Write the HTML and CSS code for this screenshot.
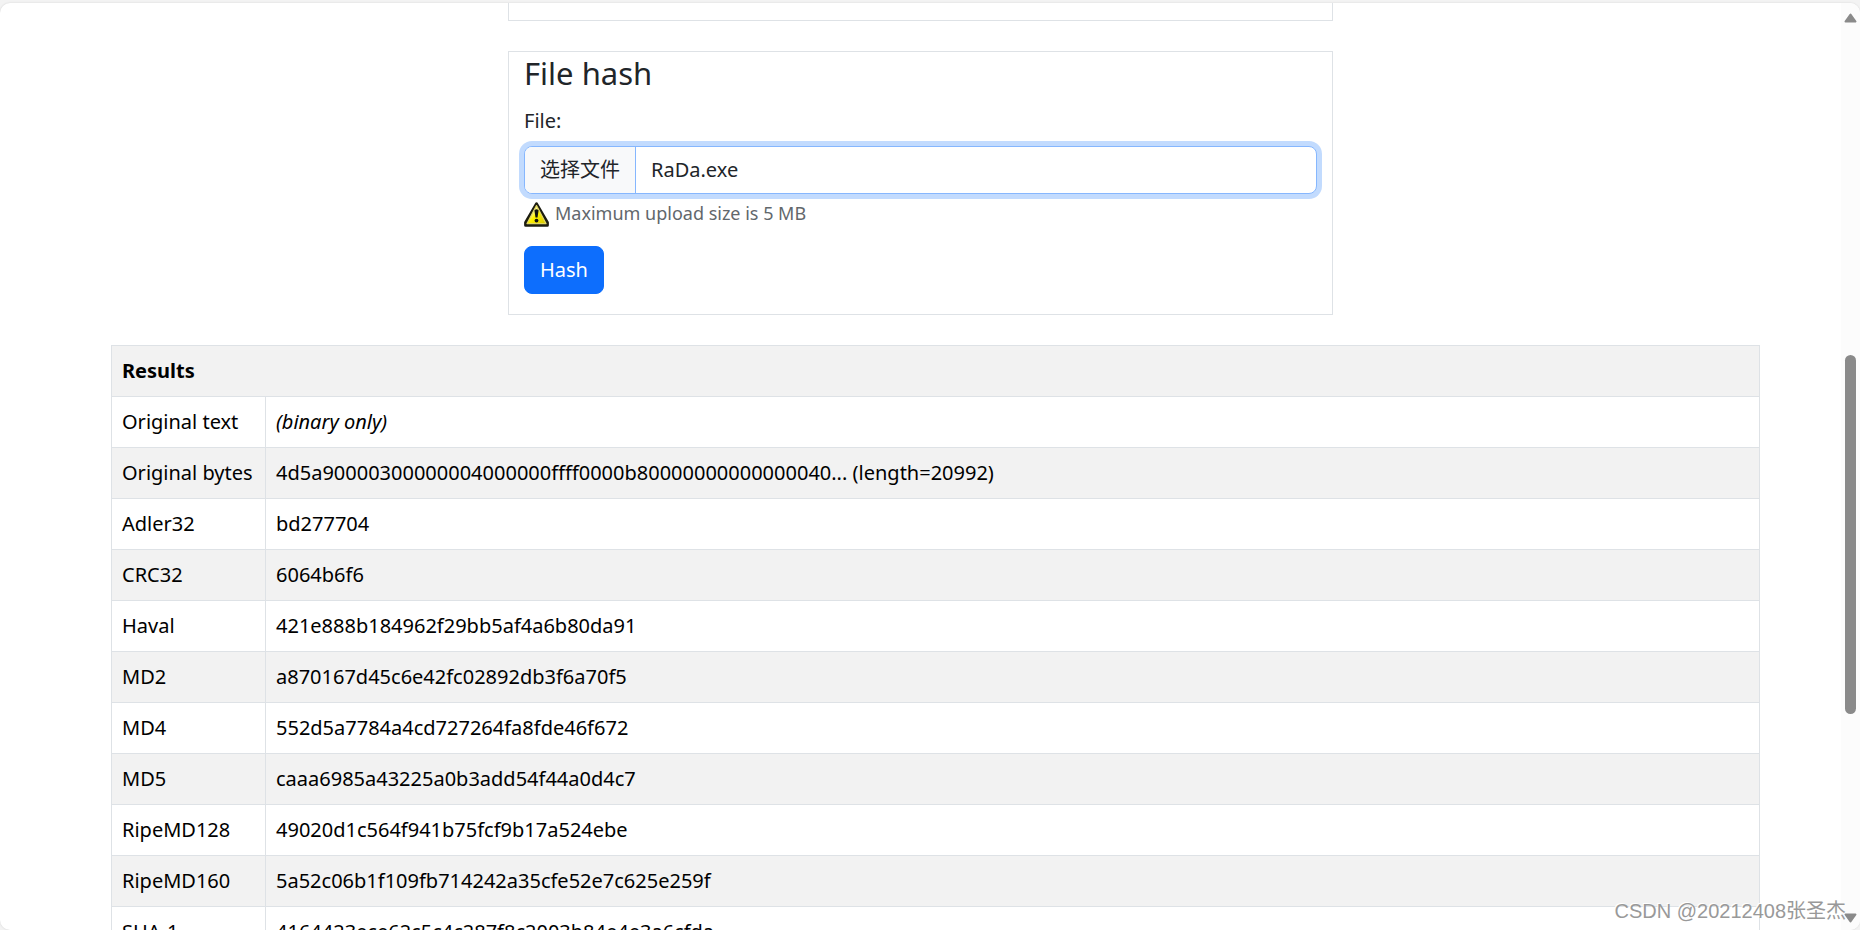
FILE: index.html
```html
<!DOCTYPE html>
<html lang="zh-CN">
<head>
<meta charset="utf-8">
<title>File hash</title>
<link rel="stylesheet" href="styles.css">
</head>
<body>
<div class="viewport">
  <main class="page">
    <section class="card card-previous"></section>
    <form class="card">
      <h2 class="card-title">File hash</h2>
      <label class="field-label" for="file">File:</label>
      <div class="file-field">
        <span class="file-button">选择文件</span>
        <span class="file-name">RaDa.exe</span>
        <input class="file-input" type="file" id="file">
      </div>
      <p class="hint">
        <svg class="hint-icon" viewBox="0 0 25 25" aria-hidden="true">
          <defs>
            <linearGradient id="warn" x1="0" y1="0" x2="1" y2="1">
              <stop offset="0.3" stop-color="#fffbb0"/>
              <stop offset="0.5" stop-color="#fff200"/>
              <stop offset="1" stop-color="#d2c400"/>
            </linearGradient>
          </defs>
          <path d="M12.5 2 L23.3 20.5 V23.2 H1.7 V20.5 Z" fill="#1c1c10" stroke="#1c1c10" stroke-width="3.2" stroke-linejoin="round"/>
          <path d="M12.5 3.6 L22 21.6 H3 Z" fill="url(#warn)" stroke="#e0d660" stroke-width="1.2" stroke-linejoin="round"/>
          <path d="M10.4 8.5 Q12.5 6 14.6 8.5 L13.5 15.6 H11.5 Z" fill="#111"/>
          <circle cx="12.5" cy="18.6" r="1.9" fill="#111"/>
        </svg>
        <span>Maximum upload size is 5 MB</span>
      </p>
      <button class="submit" type="submit">Hash</button>
    </form>
    <table class="results">
      <thead><tr><th colspan="2">Results</th></tr></thead>
      <tbody>
        <tr><td>Original text</td><td><i>(binary only)</i></td></tr>
        <tr><td>Original bytes</td><td>4d5a90000300000004000000ffff0000b80000000000000040... (length=20992)</td></tr>
        <tr><td>Adler32</td><td>bd277704</td></tr>
        <tr><td>CRC32</td><td>6064b6f6</td></tr>
        <tr><td>Haval</td><td>421e888b184962f29bb5af4a6b80da91</td></tr>
        <tr><td>MD2</td><td>a870167d45c6e42fc02892db3f6a70f5</td></tr>
        <tr><td>MD4</td><td>552d5a7784a4cd727264fa8fde46f672</td></tr>
        <tr><td>MD5</td><td>caaa6985a43225a0b3add54f44a0d4c7</td></tr>
        <tr><td>RipeMD128</td><td>49020d1c564f941b75fcf9b17a524ebe</td></tr>
        <tr><td>RipeMD160</td><td>5a52c06b1f109fb714242a35cfe52e7c625e259f</td></tr>
        <tr><td>SHA-1</td><td>4164423ece62c5c4c287f8c2003b84e4e3a6cfda</td></tr>
      </tbody>
    </table>
  </main>
  <div class="scrollbar" aria-hidden="true">
    <svg class="arrow" viewBox="0 0 13 10"><path d="M6.5 1.5 L11.5 8.5 H1.5 Z"/></svg>
    <div class="track"><div class="thumb"></div></div>
    <svg class="arrow" viewBox="0 0 13 10"><path d="M6.5 8.5 L11.5 1.5 H1.5 Z"/></svg>
  </div>
</div>
<div class="watermark">CSDN @20212408张圣杰</div>
</body>
</html>
```
FILE: styles.css
```css
* { box-sizing: border-box; }

body {
  margin: 0;
  height: 100vh;
  overflow: hidden;
  padding-top: 3px;
  background: #f3f3f3;
  color: #212529;
  font: 20px/30px "Noto Sans", "Noto Sans CJK SC", sans-serif;
}

.viewport {
  display: flex;
  height: 100%;
  overflow: hidden;
  background: #fff;
  border-radius: 10px;
  box-shadow: 0 0 2px #d0d0d0;
}

.page {
  flex: 1;
  min-width: 0;
}

.card {
  width: 100%;
  max-width: 825px;
  margin: 0 auto 30px;
  padding: 2px 15px 20px;
  border: 1px solid #dee2e6;
}

.card-previous {
  height: 18px;
  padding: 0;
  border-top: 0;
}

.card-title {
  margin: 0 0 14px;
  font-size: 31px;
  line-height: 38px;
  font-weight: 400;
}

.field-label {
  display: block;
  margin-bottom: 10px;
}

.file-field {
  position: relative;
  display: flex;
  border: 1px solid #86b7fe;
  border-radius: 8px;
  background: #fff;
  box-shadow: 0 0 0 5px #c2dbfe;
}

.file-button {
  padding: 8px 15px;
  border-right: 1px solid #86b7fe;
  border-radius: 7px 0 0 7px;
  background: #f8f9fa;
}

.file-name { padding: 8px 15px; }

.file-input {
  position: absolute;
  inset: 0;
  width: 100%;
  opacity: 0;
}

.hint {
  display: flex;
  gap: 6px;
  margin: 4px 0 18px;
  color: #62676c;
  font-size: 18px;
}

.hint-icon {
  width: 25px;
  height: 25px;
  margin-top: 4px;
}

.submit {
  display: block;
  padding: 8px 15px;
  border: 1px solid #0d6efd;
  border-radius: 8px;
  background: #0d6efd;
  color: #fff;
  font: inherit;
}

.results {
  width: calc(100% - 192px);
  margin-left: 111px;
  border-collapse: collapse;
  color: #000;
}

.results th,
.results td {
  padding: 10px;
  border: 1px solid #dee2e6;
  text-align: left;
}

.results td:first-child {
  width: 154px;
  white-space: nowrap;
}

.results thead tr,
.results tbody tr:nth-child(even) { background: #f2f2f2; }

.scrollbar {
  display: flex;
  flex-direction: column;
  align-items: center;
  width: 19px;
  padding: 10px 0 7px;
  background: #fcfcfc;
}

.arrow {
  width: 13px;
  height: 10px;
  fill: #8a8a8a;
  stroke: #8a8a8a;
  stroke-width: 2;
  stroke-linejoin: round;
}

.track {
  flex: 1;
  padding-top: 332px;
}

.thumb {
  width: 11px;
  height: 359px;
  border-radius: 6px;
  background: #8a8a8a;
}

.watermark {
  position: absolute;
  right: 14px;
  bottom: 4px;
  color: #999;
  font: 20px/30px "Liberation Sans", "Noto Sans CJK SC", sans-serif;
  text-shadow: -1px -1px 0 #fff;
}
```
